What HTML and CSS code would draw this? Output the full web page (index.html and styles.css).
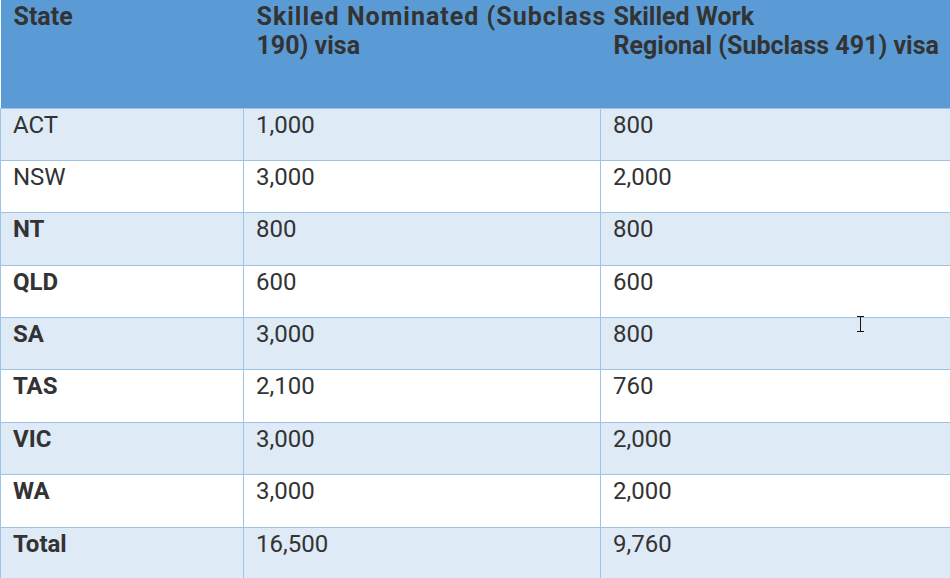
FILE: index.html
```html
<!DOCTYPE html>
<html>
<head>
<meta charset="utf-8">
<link rel="stylesheet" href="styles.css">
</head>
<body>
<table class="quota">
  <colgroup>
    <col class="c1"><col class="c2"><col class="c3">
  </colgroup>
  <thead>
    <tr>
      <th>State</th>
      <th><span class="spread">Skilled Nominated (Subclass</span><br>190) visa</th>
      <th>Skilled Work<br>Regional (Subclass 491) visa</th>
    </tr>
  </thead>
  <tbody>
    <tr class="alt"><td>ACT</td><td>1,000</td><td>800</td></tr>
    <tr><td>NSW</td><td>3,000</td><td>2,000</td></tr>
    <tr class="alt"><td class="b">NT</td><td>800</td><td>800</td></tr>
    <tr><td class="b">QLD</td><td>600</td><td>600</td></tr>
    <tr class="alt"><td class="b">SA</td><td>3,000</td><td>800</td></tr>
    <tr><td class="b">TAS</td><td>2,100</td><td>760</td></tr>
    <tr class="alt"><td class="b">VIC</td><td>3,000</td><td>2,000</td></tr>
    <tr><td class="b">WA</td><td>3,000</td><td>2,000</td></tr>
    <tr class="alt"><td class="b">Total</td><td>16,500</td><td>9,760</td></tr>
  </tbody>
</table>
<svg class="cursor" width="9" height="17" viewBox="0 0 9 17">
  <path d="M1 0.5H8M4.5 0.5V15.5M1 15.5H8" stroke="#1a1410" stroke-width="1" fill="none"/>
</svg>
</body>
</html>
```
FILE: styles.css
```css
html, body {
  margin: 0;
  padding: 0;
  background: #ffffff;
}
body {
  position: relative;
  width: 950px;
  height: 578px;
  overflow: hidden;
}
.quota {
  width: 950px;
  table-layout: fixed;
  border-collapse: collapse;
  font-family: Roboto, "Liberation Sans", sans-serif;
  font-size: 24px;
  line-height: 27px;
  color: #333333;
}
.c1 { width: 243px; }
.c2 { width: 357px; }
.c3 { width: 350px; }
.quota thead tr {
  height: 108px;
  background: #5b9bd5;
}
.quota th {
  text-align: left;
  vertical-align: top;
  font-weight: 700;
  font-size: 25px;
  line-height: 28.5px;
  padding: 3px 12px 0 13px;
  white-space: nowrap;
  border: none;
}
.spread {
  letter-spacing: 1px;
}
.quota tbody tr {
  height: 52.375px;
  background: #ffffff;
}
.quota tbody tr.alt {
  background: #deeaf6;
}
.quota td {
  vertical-align: top;
  padding: 3px 12px 0 12px;
  border: 1px solid #9dc3e6;
  font-weight: 400;
}
.quota td.b {
  font-weight: 700;
}
.cursor {
  position: absolute;
  left: 856px;
  top: 316px;
}
```
